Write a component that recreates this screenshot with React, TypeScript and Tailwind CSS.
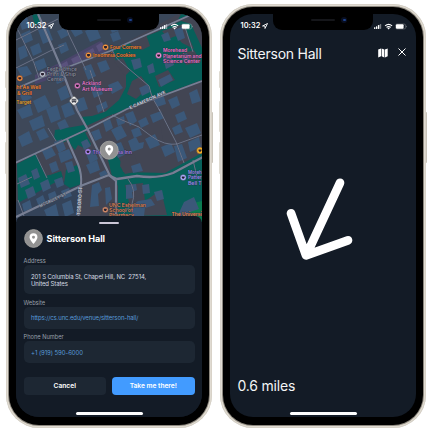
import type { ReactNode } from "react";

const FONT = "font-['Inter','Liberation_Sans',sans-serif]";

function StatusBar() {
  return (
    <div className="absolute inset-x-0 top-0 h-6 text-white">
      <div className="absolute left-1/2 top-0 h-[15.5px] w-[100px] -translate-x-1/2 rounded-b-[9px] bg-black">
        <div className="absolute left-[38px] top-[5px] h-[2px] w-[24px] rounded-full bg-[#15161a]" />
        <div className="absolute left-[68px] top-[3px] flex h-[6px] w-[6px] items-center justify-center rounded-full bg-[#080e20]">
          <div className="h-[2px] w-[3px] rounded-full bg-[#1c428d]" />
        </div>
      </div>
      <div className="flex h-6 items-center pl-[10.5px] pr-[9px]">
        <span className="text-[7.4px] font-semibold leading-none tracking-[0.05px]">10:32</span>
        <svg className="ml-[2px] h-[6px] w-[6px]" viewBox="0 0 12 12" fill="none" stroke="white" strokeWidth="1.8" strokeLinejoin="round">
          <path d="M1 6 11 1 6 11V6Z" />
        </svg>
        <svg className="ml-auto h-[7px] w-[34px]" viewBox="0 0 34 7">
          <g fill="white">
            <rect x="1" y="4.2" width="1.4" height="1.8" rx=".4" />
            <rect x="3" y="3.3" width="1.4" height="2.7" rx=".4" />
            <rect x="5" y="2.1" width="1.4" height="3.9" rx=".4" />
            <rect x="7" y="1" width="1.2" height="5" rx=".4" opacity=".45" />
          </g>
          <path d="M12.1 2.9a5.3 5.3 0 0 1 7 0M13.5 4.4a3.3 3.3 0 0 1 4.2 0" fill="none" stroke="white" strokeWidth="1.15" />
          <path d="m14.4 5.2 1.2 1.3 1.2-1.3a1.8 1.8 0 0 0-2.4 0Z" fill="white" />
          <rect x="22.6" y="1" width="10" height="5" rx="1.5" fill="none" stroke="white" strokeOpacity=".4" strokeWidth=".6" />
          <rect x="23" y="1.3" width="7.6" height="4.4" rx="1" fill="white" />
          <rect x="33.1" y="2.7" width=".6" height="1.6" rx=".3" fill="white" opacity=".45" />
        </svg>
      </div>
    </div>
  );
}

function Phone({ children }: { children: ReactNode }) {
  return (
    <div className="relative h-[423.5px] w-[206px] shrink-0">
      <div className="absolute -left-[1.5px] top-[67px] h-[17px] w-[3px] rounded-l-[1px] bg-[#dedad1]" />
      <div className="absolute -left-[1.5px] top-[97px] h-[31px] w-[3px] rounded-l-[1px] bg-[#dedad1]" />
      <div className="absolute -left-[1.5px] top-[138px] h-[32px] w-[3px] rounded-l-[1px] bg-[#dedad1]" />
      <div className="absolute -right-[1px] top-[108px] h-[51px] w-[3px] rounded-r-[1px] bg-[#c9c4ba]" />
      <div className="relative h-full rounded-[33px] bg-[#e2ddd3] p-[2px] shadow-[inset_0_0_1.5px_#aaa397]">
        <div className="h-full rounded-[31px] bg-[#8c877e] p-[1px]">
          <div className="h-full rounded-[30px] bg-black p-[7px]">
            <div className="relative h-[403px] w-[186px] overflow-hidden rounded-[23px] bg-[#131b26]">
              {children}
              <StatusBar />
              <div className="absolute bottom-[2.5px] left-[60px] h-[2.5px] w-[67px] rounded-full bg-white" />
            </div>
          </div>
        </div>
      </div>
    </div>
  );
}

const parks = [
  "32,14 40,14 41,21 35,26",
  "113,50 126,44 157,32 181,21 191,24 202,48 202,82 165,95 128,109 108,116 104,113 119,100 126,87 126,73 116,61",
  "181,14 190,14 178,20",
  "81,117 92,116 114,109 116,111 106,117 86,126",
  "55,130 84,125 90,130 62,143 54,139",
  "17,164 36,154 46,176 61,171 63,178 18,203",
  "67,140 77,135 85,132 91,144 86,149 78,145 75,150",
  "66,170 79,164 81,184 70,188 64,184",
  "108,160 116,154 121,162 123,172 165,173 202,153 202,220 118,220 118,186 112,176",
];

const clearings = [
  "129,42 146,34 150,46 142,50 132,47",
  "162,31 183,24 194,49 182,43 176,36 168,39",
  "114,61 123,58 130,71 125,76",
  "155,76 168,70 175,80 159,87",
  "180,54 194,50 201,62 186,65",
  "132,81 141,76 149,87 136,99 127,94",
  "121,158 134,153 140,171 125,174 120,166",
  "125,185 143,183 145,201 161,190 167,215 132,216",
  "48,166 58,162 61,171 50,175",
  "156,97 202,80 202,135 164,147",
];

const buildings: string[] = [
  "19,20 27,17 30,27 22,30", "21,34 30,30 33,40 24,44", "38,30 48,27 53,40 43,44", "18,48 25,45 28,56 20,60",
  "30,47 39,43 42,52 33,56", "57,31 65,28 69,35 61,39", "70,29 79,25 83,33 75,37", "85,31 96,26 101,38 90,42",
  "107,22 119,17 124,28 112,33", "132,16 146,16 143,24 133,28", "58,45 66,42 69,50 61,54", "110,34 118,31 121,39 113,42",
  "17,68 27,66 32,74 22,78", "34,62 44,58 47,67 38,71", "19,93 28,90 32,98 23,102", "33,101 45,95 51,107 38,113",
  "51,71 61,69 65,81 57,84", "57,90 66,85 70,97 61,101", "83,67 91,64 96,76 88,80", "97,63 106,60 110,69 101,73",
  "90,86 99,83 103,94 94,98", "108,85 118,81 123,88 112,94", "75,100 84,97 88,109 79,112", "96,106 106,101 108,107 98,113",
  "17,110 30,104 33,115 22,119", "29,121 42,115 45,126 33,131", "46,109 57,105 61,119 51,123", "61,106 70,102 75,114 65,118",
  "18,137 29,131 33,142 22,147", "36,132 44,128 49,137 40,141", "57,123 65,119 69,127 60,130", "41,149 51,146 56,155 46,160",
  "54,142 62,139 66,149 59,153", "58,153 69,149 73,158 61,163", "49,164 56,161 59,170 52,173", "65,163 72,161 75,171 68,173",
  "18,178 26,174 30,184 21,188", "31,171 37,168 40,177 34,180", "25,190 33,186 36,195 28,199", "40,183 48,179 51,188 43,192",
  "54,180 62,177 64,185 57,188", "22,204 30,200 32,208 24,212", "36,199 43,195 46,203 39,207", "48,194 55,191 58,199 50,203",
  "61,191 69,188 72,196 64,199", "44,210 56,204 59,217 47,217", "62,204 71,200 74,213 65,217",
  "91,132 99,129 102,138 95,141", "103,122 110,119 113,128 106,132", "111,130 121,125 127,136 117,141", "116,119 124,116 125,123 118,126",
  "125,114 133,111 137,121 130,126", "138,121 146,117 149,124 141,128", "145,139 155,134 160,145 150,149", "128,141 136,137 139,143 144,142 143,148 132,152",
  "113,145 121,142 126,154 118,158", "99,173 105,170 108,174 101,178", "86,153 94,149 98,159 90,164", "86,165 97,160 100,170 90,174",
  "81,142 87,139 91,146 84,150", "92,185 99,182 102,190 98,194 99,206 90,207", "105,188 110,187 112,199 106,205", "131,130 139,127 142,135 134,138",
  "150,115 161,111 164,118 153,123", "168,100 177,96 180,105 172,109", "175,115 184,111 187,119 178,123", "185,128 197,123 201,133 190,138",
  "172,128 180,124 183,132 175,135", "161,147 171,143 175,152 165,157", "174,146 182,144 187,158 178,162", "188,142 199,137 201,147 190,152",
  "131,60 140,58 142,67 134,70", "147,66 153,63 155,72 149,74", "163,58 171,55 174,65 166,69", "158,80 170,74 173,80 161,87",
  "181,55 187,53 190,60 184,63", "139,88 148,84 150,92 142,96", "153,97 163,93 166,104 157,107", "189,93 197,89 201,101 192,104",
  "174,30 182,27 185,38 178,41", "161,35 168,32 171,40 164,42", "126,185 136,184 137,190 132,192 133,198 126,199", "142,185 149,184 150,193 143,194",
  "131,207 138,201 151,199 155,205 145,208 144,216 132,216", "154,192 162,190 164,199 157,201", "184,202 194,197 199,209 190,212 187,218 178,215", "131,166 140,163 143,171 133,173",
];

function RoadPaths() {
  return (
    <>
      <path d="M38 14 60 65 77 110 88 130 110 176 116 181 116 220" strokeWidth="2.2" />
      <path d="M15 163 88 129 127 109 202 81" strokeWidth="1.8" />
      <path d="M15 89 43 77 73 65 110 51 157 30 195 13" strokeWidth="1.8" />
      <path d="M16 217 83 185 109 175Q113 178 117 179L137 176Q157 179 173 173L203 157" strokeWidth="2.3" />
      <path d="M67 139 78 164Q82 174 81 185L78 220" strokeWidth="2.1" />
      <path d="M16 40 36 30 58 19M16 68 50 51 64 45M18 30 34 63 39 78M61 14 69 35 86 70M90 70 104 112" strokeWidth=".8" />
      <path d="M112 50Q117 60 122 63L149 86 152 97 160 111M184 24 193 52M112 115 122 120 139 127 151 136Q165 146 177 144L202 135M159 109 176 142 184 163M48 128 56 141M35 153 47 178M17 184 32 177M18 200 24 216M128 179Q137 190 132 204L118 220M193 160 197 177" strokeWidth=".8" />
    </>
  );
}

type Poi = { x: number; y: number; r?: number; color: string; ink?: string };

function Dot({ x, y, r = 3, color, ink = "#271f2d" }: Poi) {
  return (
    <g>
      <circle cx={x} cy={y} r={r} fill={color} stroke="#30313f" strokeWidth=".4" />
      <path d={`M${x - 1.4} ${y - 1.1}h2.8v1.4l-.8 1h-1.2l-.8-1Z`} fill={ink} />
    </g>
  );
}

function Label({ x, y, w, color, children }: { x: number; y: number; w?: number; color: string; children: string }) {
  return (
    <text x={x} y={y} textLength={w} fill={color} stroke="#292d3b" strokeWidth=".7" paintOrder="stroke" lengthAdjust="spacingAndGlyphs">
      {children}
    </text>
  );
}

function CampusMap() {
  return (
    <svg className="block h-[208px] w-[186px] shrink-0" viewBox="16 14 186 208">
      <rect x="16" y="14" width="186" height="208" fill="#424553" />
      <path d="M16 14H178L110 51 73 65 16 90Z" fill="#3a4759" />
      <path d="M16 91 56 71 77 111 88 130 16 163Z" fill="#3e4859" />
      <path d="M16 202 61 180 82 186 79 222H16Z" fill="#344359" />
      <path d="M35 75 57 64 100 41 107 51 79 64 45 81 35 84Z" fill="#49456a" />
      <path d="m58 66 9-5 2 6-9 4Zm13-7 8-4 3 7-8 3Zm13-6 9-5 3 7-9 4Zm12-7 6-4 3 6-6 4Z" fill="#5a527d" />
      {parks.map((p) => <polygon key={p} points={p} fill="#07605a" />)}
      {clearings.map((p) => <polygon key={p} points={p} fill="#424553" />)}
      <path d="M185 214Q190 202 202 201V222H186Z" fill="#0b7b50" />
      {buildings.map((p) => <polygon key={p} points={p} fill="#3b5879" />)}
      <g fill="none" stroke="#394052" strokeWidth="1"><RoadPaths /></g>
      <g fill="none" stroke="#777f94" strokeLinejoin="round"><RoadPaths /></g>

      <g className="font-['Inter','Liberation_Sans',sans-serif] text-[5.1px] font-semibold">
        <Label x={110} y={49.3} w={31.5} color="#f3862e">Four Corners</Label>
        <Label x={93} y={57.2} w={42.5} color="#f3862e">Insomnia Cookies</Label>
        <Label x={163} y={52.4} w={24} color="#e678c9">Morehead</Label>
        <Label x={163} y={57.5} w={38.5} color="#e678c9">Planetarium and</Label>
        <Label x={163} y={62.7} w={37} color="#e678c9">Science Center</Label>
        <Label x={47} y={70.7} w={30} color="#858999">FedEx Office</Label>
        <Label x={47} y={76} w={29} color="#858999">Print &amp; Ship</Label>
        <Label x={47} y={81.2} w={17} color="#858999">Center</Label>
        <Label x={82} y={85.2} w={19} color="#e678c9">Ackland</Label>
        <Label x={82} y={90.5} w={30} color="#e678c9">Art Museum</Label>
        <Label x={16.3} y={89.3} w={24.5} color="#f3862e">ht As Well</Label>
        <Label x={17} y={94.8} w={15} color="#f3862e">&amp; Grill</Label>
        <Label x={16.3} y={104} w={15} color="#e7a52c">Target</Label>
        <Label x={92.5} y={153.8} w={39.5} color="#a27ee9">The Carolina Inn</Label>
        <Label x={188} y={174.2} w={13.7} color="#8e93ee">Moreh</Label>
        <Label x={188} y={179.4} w={13.7} color="#8e93ee">Patter</Label>
        <Label x={188} y={184.6} w={13.7} color="#8e93ee">Bell T</Label>
        <Label x={109} y={206.8} w={37} color="#d98457">UNC Eshelman</Label>
        <Label x={109} y={212} w={24} color="#d98457">School of</Label>
        <Label x={109} y={217.2} w={25} color="#d98457">Pharmacy</Label>
        <Label x={171.5} y={216} w={30.2} color="#e38a54">The Universi</Label>
      </g>
      <g className="font-['Inter','Liberation_Sans',sans-serif] text-[4.6px] font-semibold" fill="#ced4df" stroke="#424a5b" strokeWidth=".8" paintOrder="stroke">
        <text transform="translate(130.3 109.4) rotate(-24)" textLength="39">E CAMERON AVE</text>
        <text className="text-[5px]" transform="translate(80.3 215.5) rotate(-86)" textLength="29">TSBORO ST</text>
        <text className="text-[4px]" transform="translate(40 207.4) rotate(-25)" textLength="29" fill="#a4adbc">MCCAULEY ST</text>
      </g>

      <Dot x={105.5} y={47.2} color="#f5963f" />
      <Dot x={88.5} y={55.2} color="#f5963f" />
      <Dot x={158.6} y={55.5} color="#ee8ed5" />
      <Dot x={77.4} y={85.8} color="#d777bf" />
      <Dot x={42.5} y={74.2} color="#bdc2d0" />
      <Dot x={19.8} y={78.3} color="#f18b3e" />
      <Dot x={88} y={151.8} color="#ab86ee" />
      <Dot x={183.2} y={177.5} color="#abb0ff" />
      <Dot x={105.3} y={209.8} color="#d08a68" />
      <Dot x={200} y={150.5} r={3.5} color="#eeaa29" />
      <rect x="70.4" y="97.2" width="7.2" height="7.2" rx="1.6" transform="rotate(45 74 100.8)" fill="#eee" stroke="#555" strokeWidth=".5" />
      <path d="M71.7 98.8h4.6v3.4h-4.6Z" fill="#454752" />
      <path d="M72.4 100.2h1.2m.9 0h1.2" stroke="#eee" strokeWidth=".8" />
      <path d="M72.6 102v.8m2.8-.8v.8" stroke="#454752" strokeWidth=".8" />
      <MapPin cx={109.2} cy={150.2} />
    </svg>
  );
}

function MapPin({ cx, cy }: { cx: number; cy: number }) {
  return (
    <g transform={`translate(${cx} ${cy})`}>
      <circle r="9" fill="#929292" stroke="#aaa9a5" strokeWidth=".8" />
      <path fillRule="evenodd" d="M0-5.2A4 4 0 0 0-4-1.2C-4 1.4 0 5.5 0 5.5S4 1.4 4-1.2A4 4 0 0 0 0-5.2Zm0 2.5a1.5 1.5 0 1 1 0 3 1.5 1.5 0 0 1 0-3Z" fill="white" />
    </g>
  );
}

function Field({ label, className, children }: { label: string; className: string; children: ReactNode }) {
  return (
    <div className="flex flex-col">
      <span className="h-[9px] text-[5.7px] leading-[9px] text-[#99a0ab]">{label}</span>
      <div className={`flex flex-col justify-center rounded-[5px] bg-[#1d2733] pl-[7.5px] text-[6px] leading-[7px] ${className}`}>{children}</div>
    </div>
  );
}

function LocationSheet() {
  return (
    <section className="relative -mt-[6px] flex h-[201px] flex-col rounded-t-[7px] bg-[#131b26] px-[7.5px] text-white">
      <div className="mx-auto mt-[5.5px] h-[2px] w-[20px] shrink-0 rounded-full bg-[#cbc7d7]" />
      <div className="mt-[5px] flex h-[20px] items-center gap-[4px]">
        <svg className="h-[19px] w-[19px]" viewBox="-9.6 -9.6 19.2 19.2"><MapPin cx={0} cy={0} /></svg>
        <h2 className="text-[9.1px] font-bold leading-none tracking-[-0.06px]">Sitterson Hall</h2>
      </div>
      <div className="mt-[7.5px] flex flex-col gap-[3.5px]">
        <Field label="Address" className="h-[29px]">
          <span className="whitespace-pre tracking-[-0.1px] text-[#d7dce3]">201 S Columbia St, Chapel Hill, NC  27514,</span>
          <span className="tracking-[-0.1px] text-[#d7dce3]">United States</span>
        </Field>
        <Field label="Website" className="h-[22px] tracking-[-0.12px] text-[#599bd8]">https://cs.unc.edu/venue/sitterson-hall/</Field>
        <Field label="Phone Number" className="h-[22px] tracking-[-0.06px] text-[#599bd8]">+1 (919) 590-6000</Field>
      </div>
      <div className="mt-[14px] flex gap-[6px] text-[6.7px] font-semibold">
        <button className="h-[18px] flex-1 rounded-[4px] bg-[#1d2733]">Cancel</button>
        <button className="h-[18px] flex-1 rounded-[4px] bg-[#429bff] tracking-[-0.04px]">Take me there!</button>
      </div>
    </section>
  );
}

function CompassScreen() {
  return (
    <div className="flex h-full flex-col px-[7.5px] pt-[31px] text-[#f4f5f6]">
      <header className="flex h-[18px] items-center">
        <h1 className="text-[14px] leading-none tracking-[-0.25px]">Sitterson Hall</h1>
        <svg className="mb-[3px] ml-auto h-[10px] w-[10px]" viewBox="0 0 10 10">
          <path d="M.2 1.6 3 .4v7.9L.2 9.5ZM3.6.4l2.7 1.2v7.9L3.6 8.3ZM6.9 1.6 9.7.4v7.9L6.9 9.5Z" fill="white" />
        </svg>
        <svg className="mb-[5px] ml-[10px] mr-[3px] h-[8px] w-[8px]" viewBox="0 0 8 8" stroke="white" strokeWidth="1"><path d="m.5.5 7 7m0-7-7 7" /></svg>
      </header>
      <div className="flex flex-1 items-start justify-center pt-[113px]">
        <svg className="mr-[6px] h-[86px] w-[70px]" viewBox="285 176 70 86" fill="none" stroke="white" strokeWidth="8.7" strokeLinecap="round" strokeLinejoin="round">
          <path d="m291 213.3 15 42L348 240.3M340 182.8l-33.6 72.2" />
        </svg>
      </div>
      <p className="mb-[24px] text-[14px] leading-[14px] tracking-[-0.2px]">0.6 miles</p>
    </div>
  );
}

export default function App() {
  return (
    <main className={`flex h-[432px] w-[432px] gap-[8px] overflow-hidden bg-white pl-[6px] pt-[4px] antialiased ${FONT}`}>
      <Phone>
        <CampusMap />
        <LocationSheet />
      </Phone>
      <Phone>
        <CompassScreen />
      </Phone>
    </main>
  );
}
